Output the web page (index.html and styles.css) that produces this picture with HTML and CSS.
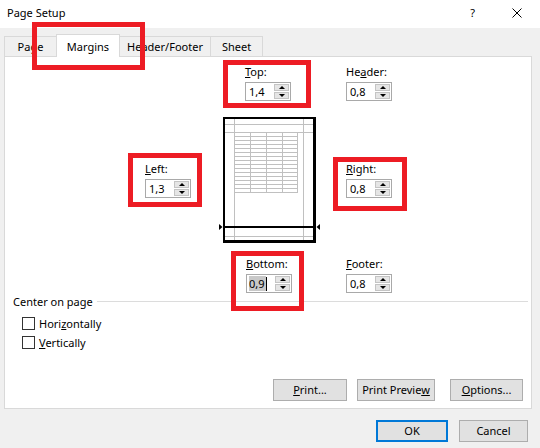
FILE: index.html
```html
<!DOCTYPE html>
<html>
<head>
<meta charset="utf-8">
<link rel="stylesheet" href="styles.css">
</head>
<body>
<div class="dialog">
  <div class="titlebar">
    <span class="title">Page Setup</span>
    <span class="tb-help">?</span>
    <svg class="tb-close" width="10" height="10" viewBox="0 0 10 10"><path d="M0.5 0.5 L9.5 9.5 M9.5 0.5 L0.5 9.5" stroke="#000" stroke-width="1" fill="none"/></svg>
  </div>
  <div class="main">
    <div class="tabs">
      <div class="tab first" style="width:53px">Page</div>
      <div class="tab selected" style="width:64px">Margins</div>
      <div class="tab" style="width:91px">Header/Footer</div>
      <div class="tab" style="width:52px">Sheet</div>
    </div>
    <div class="panel">
      <div class="margins">
        <div class="col col-left">
          <div class="field">
            <div class="flabel"><u>L</u>eft:</div>
            <div class="spin"><span class="val">1,3</span><div class="arrows"><span class="up"></span><span class="down"></span></div></div>
          </div>
        </div>
        <div class="col col-mid">
          <div class="field f-top">
            <div class="flabel"><u>T</u>op:</div>
            <div class="spin"><span class="val">1,4</span><div class="arrows"><span class="up"></span><span class="down"></span></div></div>
          </div>
          <svg class="preview" width="102" height="128" viewBox="0 0 102 128" shape-rendering="crispEdges">
            <rect x="4" y="1" width="93" height="126" fill="#000"/>
            <rect x="6" y="3" width="88" height="121" fill="#fff"/>
            <g fill="#c0c0c0">
              <rect x="15" y="3" width="1" height="121"/>
              <rect x="84" y="3" width="1" height="121"/>
              <rect x="6" y="8" width="88" height="1"/>
              <rect x="6" y="16" width="88" height="1"/>
              <rect x="6" y="120" width="88" height="1"/>
              <rect x="31" y="16" width="1" height="61"/>
              <rect x="47" y="16" width="1" height="61"/>
              <rect x="63" y="16" width="1" height="61"/>
              <rect x="78" y="16" width="1" height="61"/>
              <rect x="15" y="20" width="64" height="1"/>
              <rect x="15" y="24" width="64" height="1"/>
              <rect x="15" y="28" width="64" height="1"/>
              <rect x="15" y="32" width="64" height="1"/>
              <rect x="15" y="36" width="64" height="1"/>
              <rect x="15" y="40" width="64" height="1"/>
              <rect x="15" y="44" width="64" height="1"/>
              <rect x="15" y="48" width="64" height="1"/>
              <rect x="15" y="52" width="64" height="1"/>
              <rect x="15" y="56" width="64" height="1"/>
              <rect x="15" y="60" width="64" height="1"/>
              <rect x="15" y="64" width="64" height="1"/>
              <rect x="15" y="68" width="64" height="1"/>
              <rect x="15" y="72" width="64" height="1"/>
              <rect x="15" y="76" width="64" height="1"/>
            </g>
            <rect x="6" y="110" width="88" height="2" fill="#000"/>
            <polygon points="0,108 3.5,111 0,114" fill="#000" shape-rendering="auto"/>
            <polygon points="101,108 97.5,111 101,114" fill="#000" shape-rendering="auto"/>
          </svg>
          <div class="field f-bottom">
            <div class="flabel"><u>B</u>ottom:</div>
            <div class="spin"><span class="val"><span class="sel">0,9</span><span class="caret"></span></span><div class="arrows"><span class="up"></span><span class="down"></span></div></div>
          </div>
        </div>
        <div class="col col-right">
          <div class="field">
            <div class="flabel">He<u>a</u>der:</div>
            <div class="spin"><span class="val">0,8</span><div class="arrows"><span class="up"></span><span class="down"></span></div></div>
          </div>
          <div class="field f-right">
            <div class="flabel"><u>R</u>ight:</div>
            <div class="spin"><span class="val">0,8</span><div class="arrows"><span class="up"></span><span class="down"></span></div></div>
          </div>
          <div class="field f-footer">
            <div class="flabel"><u>F</u>ooter:</div>
            <div class="spin"><span class="val">0,8</span><div class="arrows"><span class="up"></span><span class="down"></span></div></div>
          </div>
        </div>
      </div>
      <div class="group-head"><span>Center on page</span><div class="rule"></div></div>
      <div class="checks">
        <div class="check"><span class="box"></span><span>Hori<u>z</u>ontally</span></div>
        <div class="check"><span class="box"></span><span><u>V</u>ertically</span></div>
      </div>
      <div class="panel-buttons">
        <div class="btn w-print"><u>P</u>rint...</div>
        <div class="btn w-preview">Print Previe<u>w</u></div>
        <div class="btn w-options"><u>O</u>ptions...</div>
      </div>
    </div>
    <div class="dialog-buttons">
      <div class="btn default w-ok">OK</div>
      <div class="btn w-cancel">Cancel</div>
    </div>
  </div>
  <div class="mark" style="left:32px;top:22px;width:113px;height:48px"></div>
  <div class="mark" style="left:223px;top:60px;width:88px;height:48px"></div>
  <div class="mark" style="left:128px;top:153px;width:74px;height:54px"></div>
  <div class="mark" style="left:333px;top:157px;width:74px;height:54px"></div>
  <div class="mark" style="left:231px;top:251px;width:73px;height:60px"></div>
</div>
</body>
</html>
```
FILE: styles.css
```css
* { box-sizing: border-box; }
html, body { margin: 0; padding: 0; }
body {
  width: 540px;
  height: 448px;
  overflow: hidden;
  font-family: "Noto Sans", "Segoe UI", sans-serif;
  font-size: 11px;
  line-height: 15px;
  color: #000;
  background: #f0f0f0;
}
.dialog {
  position: relative;
  width: 540px;
  height: 448px;
}
.titlebar {
  height: 28px;
  background: #fff;
  display: flex;
  align-items: flex-start;
  padding: 5px 18px 0 7px;
}
.tb-help {
  margin-left: auto;
  margin-right: 37px;
  margin-top: 0;
}
.tb-close { margin-top: 3px; }
.main {
  padding: 0 8px 0 4px;
}
.tabs {
  display: flex;
  align-items: flex-end;
  height: 28px;
  position: relative;
  z-index: 2;
}
.tab {
  height: 20px;
  line-height: 19px;
  text-align: center;
  border-top: 1px solid #d9d9d9;
  border-right: 1px solid #d9d9d9;
  background: #f0f0f0;
}
.tab.first { border-left: 1px solid #d9d9d9; }
.tab.selected {
  height: 23px;
  margin-bottom: -1px;
  margin-left: -1px;
  padding-top: 2px;
  background: #fff;
  border-left: 1px solid #d9d9d9;
}
.panel {
  height: 353px;
  background: #fff;
  border: 1px solid #d9d9d9;
  display: flex;
  flex-direction: column;
  padding-bottom: 7px;
}
.margins {
  display: grid;
  grid-template-columns: 74px 127px auto;
  padding: 7px 0 0 140px;
}
.col { display: flex; flex-direction: column; align-items: flex-start; }
.col-left { padding-top: 97px; }
.f-top { margin-left: 26px; }
.preview { display: block; margin-top: 15px; }
.f-bottom { margin-left: 27px; margin-top: 12px; }
.f-right { margin-top: 60px; }
.f-footer { margin-top: 58px; }
.flabel { height: 15px; margin-bottom: 3px; white-space: nowrap; }
.spin {
  width: 46px;
  height: 19px;
  border: 1px solid #a9a9a9;
  background: #fff;
  display: flex;
  align-items: center;
  padding-left: 3px;
}
.val { display: flex; align-items: center; height: 15px; }
.sel { background: #c8c8c8; padding: 0 1px 0 0; margin-left: -1px; }
.caret { width: 1px; height: 14px; background: #000; }
.arrows {
  margin-left: auto;
  margin-right: 1px;
  width: 15px;
  height: 15px;
  display: flex;
  flex-direction: column;
  gap: 1px;
}
.arrows span {
  flex: 1;
  background: #e5e5e5;
  border: 1px solid #c4c4c4;
  display: flex;
  align-items: center;
  justify-content: center;
}
.arrows .up::after {
  content: "";
  border-left: 3px solid transparent;
  border-right: 3px solid transparent;
  border-bottom: 3px solid #000;
}
.arrows .down::after {
  content: "";
  border-left: 3px solid transparent;
  border-right: 3px solid transparent;
  border-top: 3px solid #000;
}
.group-head {
  display: flex;
  align-items: center;
  margin-top: 1px;
  padding: 0 3px 0 8px;
  height: 15px;
}
.group-head .rule {
  flex: 1;
  height: 1px;
  background: #dcdcdc;
  margin-left: 4px;
}
.checks { margin-top: 5px; padding-left: 17px; }
.check {
  display: flex;
  align-items: center;
  height: 19px;
  line-height: 19px;
}
.check .box {
  width: 13px;
  height: 13px;
  border: 1px solid #333;
  background: #fff;
  margin-right: 4px;
}
.btn {
  height: 22px;
  line-height: 20px;
  text-align: center;
  background: #e1e1e1;
  border: 1px solid #adadad;
  white-space: nowrap;
}
.btn.default { border: 2px solid #0078d7; line-height: 18px; }
.panel-buttons {
  margin-top: auto;
  display: flex;
  justify-content: flex-end;
  padding-right: 8px;
}
.w-print { width: 74px; }
.w-preview { width: 78px; margin-left: 10px; }
.w-options { width: 73px; margin-left: 15px; }
.dialog-buttons {
  display: flex;
  justify-content: flex-end;
  margin-top: 11px;
  padding-right: 4px;
}
.w-ok { width: 72px; }
.w-cancel { width: 69px; margin-left: 11px; }
.mark {
  position: absolute;
  border: 5px solid #ed1c24;
  z-index: 5;
}
```
